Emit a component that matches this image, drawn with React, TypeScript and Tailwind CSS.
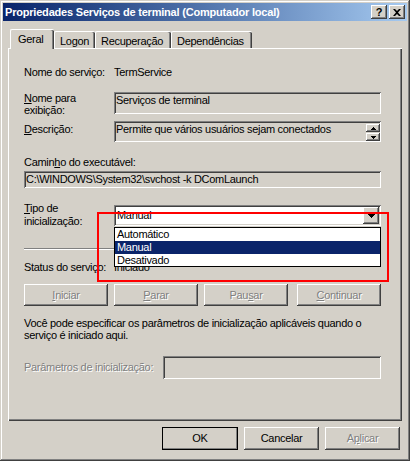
import React from "react";

// classic Win2000 3D edges
const raised =
  "shadow-[inset_-1px_-1px_#404040,inset_1px_1px_#ffffff,inset_-2px_-2px_#808080,inset_2px_2px_#d4d0c8]";
const sunken =
  "shadow-[inset_1px_1px_#808080,inset_-1px_-1px_#ffffff,inset_2px_2px_#404040,inset_-2px_-2px_#d4d0c8]";
const disabled = "text-[#808080] [text-shadow:1px_1px_0_#ffffff]";

function Btn({
  children,
  w,
  off,
  def,
}: {
  children: React.ReactNode;
  w: string;
  off?: boolean;
  def?: boolean;
}) {
  return (
    <div
      className={`${w} h-full flex items-center justify-center ${raised} ${off ? disabled : "text-black"} ${
        def ? "outline outline-1 outline-black -outline-offset-1" : ""
      }`}
    >
      {children}
    </div>
  );
}

function Arrow() {
  return (
    <svg width="7" height="4" viewBox="0 0 7 4" className="block">
      <path d="M0 0h7v1H6v1H5v1H4v1H3V3H2V2H1V1H0z" fill="#000" />
    </svg>
  );
}

const TABS = [
  { label: "Geral", w: "w-[44px]" },
  { label: "Logon", w: "w-[41px]" },
  { label: "Recuperação", w: "w-[76px]" },
  { label: "Dependências", w: "w-[81px]" },
];

export default function App() {
  return (
    <div
      className={`relative w-[410px] h-[461px] bg-[#d4d0c8] p-[3px] flex flex-col text-[11px] leading-[13px] tracking-[-0.3px] text-black font-['Liberation_Sans',Arial,sans-serif] shadow-[inset_-1px_-1px_#404040,inset_1px_1px_#d4d0c8,inset_-2px_-2px_#808080,inset_2px_2px_#ffffff] overflow-hidden`}
    >
      {/* Title bar */}
      <div className="h-[18px] flex items-center justify-between pl-[2px] pr-[2px] bg-gradient-to-r from-[#0a246a] to-[#a6caf0]">
        <span className="text-white font-bold text-[11px] tracking-[-0.2px] whitespace-nowrap">
          Propriedades Serviços de terminal (Computador local)
        </span>
        <div className="flex gap-[2px]">
          <div className={`w-[16px] h-[14px] bg-[#d4d0c8] ${raised} flex items-center justify-center font-bold text-[11px]`}>?</div>
          <div className={`w-[16px] h-[14px] bg-[#d4d0c8] ${raised} flex items-center justify-center`}>
            <svg width="8" height="7" viewBox="0 0 8 7">
              <path d="M0 0h2l2 2 2-2h2L5 3.5 8 7H6L4 5 2 7H0l3-3.5z" fill="#000" />
            </svg>
          </div>
        </div>
      </div>

      <div className="flex-1 flex flex-col px-[5px] pt-[8px]">
        {/* Tabs */}
        <div className="h-[19px] flex items-end">
          {TABS.map((t, i) =>
            i === 0 ? (
              <div
                key={t.label}
                className={`${t.w} ml-[2px] h-[20px] -mb-px relative z-10 bg-[#d4d0c8] border-l border-t border-white rounded-t-[2px] shadow-[inset_-1px_0_#404040,inset_-2px_0_#808080] pl-[7px] pt-[3px]`}
              >
                {t.label}
              </div>
            ) : (
              <div
                key={t.label}
                className={`${t.w} h-[17px] border-l border-t border-white rounded-t-[2px] shadow-[inset_-1px_0_#404040,inset_-2px_0_#808080] pl-[5px] pt-[3px]`}
              >
                {t.label}
              </div>
            )
          )}
        </div>

        {/* Tab panel */}
        <div className="h-[373px] border-l border-t border-white shadow-[inset_-1px_-1px_#404040,inset_-2px_-2px_#808080] pl-[15px] pr-[21px] pt-[17px] flex flex-col">
          <div className="flex h-[13px]">
            <span className="w-[90px]">Nome do serviço:</span>
            <span>TermService</span>
          </div>

          <div className="flex mt-[13px] h-[22px]">
            <span className="w-[90px] leading-[12px]">
              <u>N</u>ome para
              <br />
              exibição:
            </span>
            <div className={`flex-1 h-full ${sunken} pl-[2px] pt-[2px]`}>Serviços de terminal</div>
          </div>

          <div className="flex mt-[7px] h-[21px]">
            <span className="w-[90px] pt-[2px]">
              <u>D</u>escrição:
            </span>
            <div className={`flex-1 h-full ${sunken} pl-[2px] pt-[2px] pr-[1px] flex`}>
              <span className="flex-1">Permite que vários usuários sejam conectados</span>
              <div className="flex flex-col gap-[1px] pt-[1px]">
                <div className={`w-[14px] h-[8px] ${raised} flex items-center justify-center`}>
                  <svg width="5" height="3" viewBox="0 0 5 3"><path d="M2 0h1v1h1v1h1v1H0V2h1V1h1z" fill="#000" /></svg>
                </div>
                <div className={`w-[14px] h-[8px] ${raised} flex items-center justify-center`}>
                  <svg width="5" height="3" viewBox="0 0 5 3"><path d="M0 0h5v1H4v1H3v1H2V2H1V1H0z" fill="#000" /></svg>
                </div>
              </div>
            </div>
          </div>

          <div className="mt-[14px] h-[13px]">
            Camin<u>h</u>o do executável:
          </div>
          <div className={`mt-[2px] h-[17px] ${sunken} pl-[2px] pt-[2px] whitespace-nowrap`}>
            C:\WINDOWS\System32\svchost -k DComLaunch
          </div>

          <div className="flex mt-[14px] h-[26px]">
            <span className="w-[90px]">
              <u>T</u>ipo de
              <br />
              inicialização:
            </span>
            <div className={`flex-1 mt-[3px] h-[21px] bg-white ${sunken} flex items-center pl-[3px] pr-[2px]`}>
              <span className="flex-1">Manual</span>
              <div className={`w-[16px] h-[17px] bg-[#d4d0c8] ${raised} flex items-center justify-center`}>
                <Arrow />
              </div>
            </div>
          </div>

          <div className="mt-[20px] h-[2px] border-t border-[#808080] border-b border-b-white" />

          <div className="flex mt-[11px] h-[13px]">
            <span className="w-[90px]">Status do serviço:</span>
            <span>Iniciado</span>
          </div>

          <div className="flex mt-[10px] h-[22px]">
            <Btn w="w-[84px]" off>
              <span>
                <u>I</u>niciar
              </span>
            </Btn>
            <div className="w-[6px]" />
            <Btn w="w-[84px]" off>
              <span>
                <u>P</u>arar
              </span>
            </Btn>
            <div className="w-[6px]" />
            <Btn w="w-[84px]" off>
              <span>
                Pau<u>s</u>ar
              </span>
            </Btn>
            <div className="w-[9px]" />
            <Btn w="w-[84px]" off>
              <span>
                <u>C</u>ontinuar
              </span>
            </Btn>
          </div>

          <div className="mt-[11px] leading-[12px] whitespace-nowrap">
            Você pode especificar os parâmetros de inicialização aplicáveis quando o
            <br />
            serviço é iniciado aqui.
          </div>

          <div className="flex items-center mt-[15px] h-[23px]">
            <span className={`w-[139px] ${disabled}`}>Parâmetros de inicialização:</span>
            <div className={`flex-1 h-full ${sunken}`} />
          </div>
        </div>

        {/* Bottom buttons */}
        <div className="flex justify-end mt-[6px] h-[23px] pr-[2px]">
          <Btn w="w-[76px]" def>
            OK
          </Btn>
          <div className="w-[6px]" />
          <Btn w="w-[75px]">Cancelar</Btn>
          <div className="w-[6px]" />
          <Btn w="w-[75px]" off>
            <span>
              A<u>p</u>licar
            </span>
          </Btn>
        </div>
      </div>

      {/* Open dropdown list */}
      <div className="absolute left-[114px] top-[227px] w-[267px] h-[40px] bg-white border border-black flex flex-col">
        <div className="h-[13px] pl-[2px] leading-[13px]">Automático</div>
        <div className="h-[13px] pl-[2px] leading-[13px] bg-[#0a246a] text-white">Manual</div>
        <div className="h-[12px] pl-[2px] leading-[13px]">Desativado</div>
      </div>

      {/* Red highlight box */}
      <div className="absolute left-[97px] top-[212px] w-[292px] h-[70px] border-2 border-[#ff0000]" />
    </div>
  );
}
